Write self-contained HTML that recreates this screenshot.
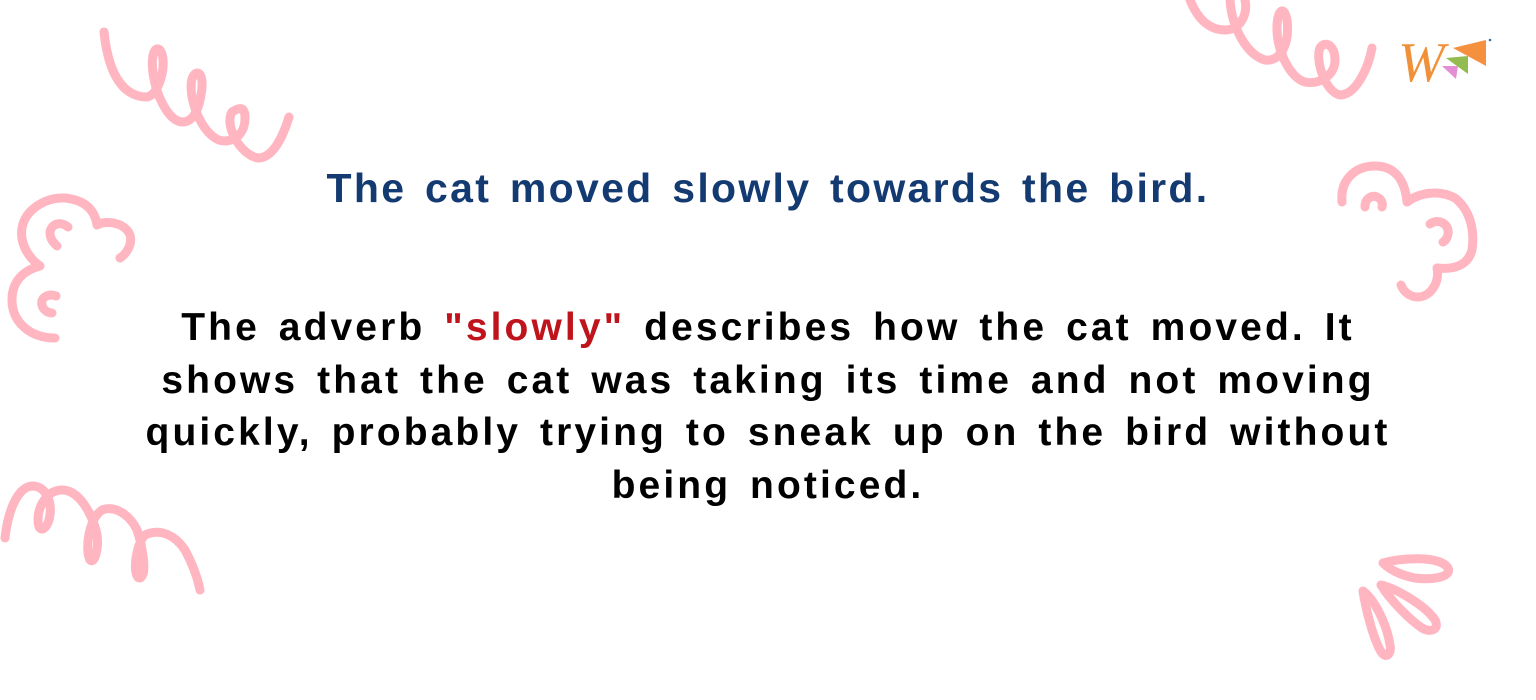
<!DOCTYPE html>
<html><head><meta charset="utf-8"><style>
html,body{margin:0;padding:0;background:#fff;}
body{width:1536px;height:700px;position:relative;overflow:hidden;font-family:"Liberation Sans",sans-serif;}
.t{position:absolute;left:0;width:1536px;text-align:center;font-weight:bold;}
#title{top:165px;font-size:41px;letter-spacing:2.3px;word-spacing:5px;color:#143a72;}
#body{top:302px;font-size:39px;letter-spacing:3.1px;word-spacing:5px;line-height:52.5px;color:#000;}
.r{color:#c0141c;}
svg{position:absolute;left:0;top:0;}
</style></head><body>
<svg width="1536" height="700" fill="none" stroke="#ffb6c1" stroke-width="9" stroke-linecap="round" stroke-linejoin="round">
<path d="M104 32 C108 70 120 95 145 97 C160 98 168 60 160 50 C150 42 148 80 165 108 C178 130 195 125 200 100 C205 78 200 70 195 74 C185 82 195 125 215 138 C225 145 245 140 245 118 C245 105 238 108 232 112 C224 125 240 155 258 158 C275 158 285 130 289 117"/>
<path d="M55 338 C30 338 12 322 12 300 C12 280 25 270 40 266 C25 255 20 240 22 228 C25 210 45 197 65 198 C85 200 95 210 97 225 C105 220 125 222 130 235 C133 245 125 255 120 258"/>
<path d="M68 227 C60 220 50 225 50 233 C50 240 55 244 57 246"/>
<path d="M56 296 C48 293 40 298 42 305 C43 310 48 313 52 313"/>
<path d="M5 538 C8 510 18 487 32 486 C45 486 52 500 50 515 C48 530 38 535 38 520 C38 505 48 490 62 490 C78 490 90 510 96 530 C100 545 95 565 90 560 C85 550 88 520 102 510 C115 505 130 515 137 530 C142 545 148 575 140 578 C132 578 135 545 145 535 C160 528 175 535 185 550 C193 565 198 580 200 590"/>
<path d="M1190 0 C1198 20 1210 30 1225 30 C1240 30 1248 15 1245 0 M1230 0 C1232 30 1248 55 1265 60 C1280 62 1290 45 1287 20 C1284 5 1278 10 1277 25 C1276 50 1290 78 1305 82 C1320 85 1335 75 1335 60 C1335 45 1325 40 1320 48 C1315 60 1325 92 1340 95 C1355 95 1368 70 1372 48"/>
<path d="M1342 202 C1340 180 1355 166 1375 166 C1395 166 1405 180 1407 202 C1420 192 1440 190 1455 198 C1470 210 1475 230 1472 250 C1468 265 1455 270 1437 268 C1440 283 1430 297 1418 297 C1410 297 1404 292 1401 285"/>
<path d="M1365 207 C1365 198 1372 195 1377 197 C1382 199 1383 204 1382 207"/>
<path d="M1430 224 C1437 219 1446 222 1448 230 C1449 237 1445 241 1443 242"/>
<path d="M1383 563 C1400 558 1440 555 1448 568 C1452 578 1430 580 1415 578 C1400 575 1390 570 1383 563 Z"/>
<path d="M1381 585 C1395 588 1425 605 1435 620 C1440 630 1430 633 1422 628 C1410 620 1390 600 1381 585 Z"/>
<path d="M1363 591 C1365 605 1372 635 1380 650 C1385 660 1392 655 1390 645 C1387 625 1375 600 1363 591 Z"/>
</svg>
<svg width="100" height="50" style="left:1398px;top:36px" viewBox="0 0 100 50">
<text x="0" y="45" font-family="Liberation Serif,serif" font-style="italic" font-size="56" fill="#f0913a">W</text>
<polygon points="55,12 88,4 88,30" fill="#f5903f"/>
<polygon points="48,22 70,20 70,38" fill="#93bb4f"/>
<polygon points="44,30 60,30 58,43" fill="#e58ed6"/>
<circle cx="92" cy="4" r="1.3" fill="#3b6fb0"/>
</svg>
<div class="t" id="title">The cat moved slowly towards the bird.</div>
<div class="t" id="body">The adverb <span class="r">"slowly"</span> describes how the cat moved. It<br>shows that the cat was taking its time and not moving<br>quickly, probably trying to sneak up on the bird without<br>being noticed.</div>
</body></html>
